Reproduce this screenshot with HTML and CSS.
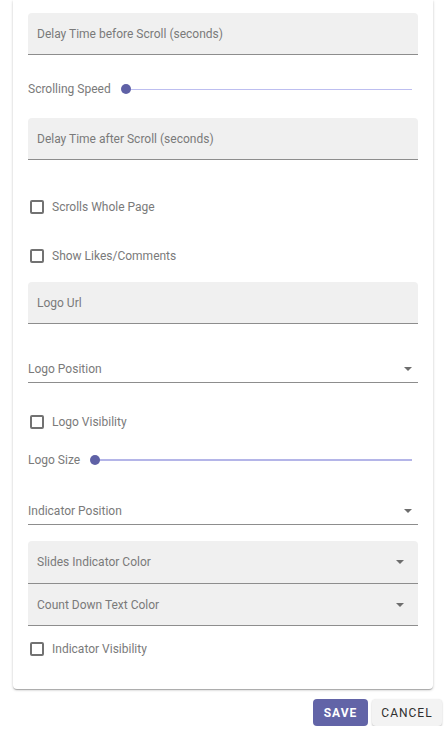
FILE: index.html
```html
<!DOCTYPE html>
<html>
<head>
<meta charset="utf-8">
<link rel="stylesheet" href="styles.css">
</head>
<body>
<div class="card">
  <div class="filled field-1"><span class="label">Delay Time before Scroll (seconds)</span></div>
  <div class="slider-row sr-1">
    <span class="slider-label">Scrolling Speed</span>
    <div class="slider"><span class="track thin"></span><span class="thumb"></span></div>
  </div>
  <div class="filled field-2"><span class="label">Delay Time after Scroll (seconds)</span></div>
  <label class="check cb-1"><span class="box"></span><span class="check-label">Scrolls Whole Page</span></label>
  <label class="check cb-2"><span class="box"></span><span class="check-label">Show Likes/Comments</span></label>
  <div class="filled field-3"><span class="label">Logo Url</span></div>
  <div class="select sel-1"><span class="sel-text">Logo Position</span><span class="arrow"></span></div>
  <label class="check cb-3"><span class="box"></span><span class="check-label">Logo Visibility</span></label>
  <div class="slider-row sr-2">
    <span class="slider-label">Logo Size</span>
    <div class="slider"><span class="track thick"></span><span class="thumb"></span></div>
  </div>
  <div class="select sel-2"><span class="sel-text">Indicator Position</span><span class="arrow"></span></div>
  <div class="filled fsel fs-1"><span class="label">Slides Indicator Color</span><span class="arrow"></span></div>
  <div class="filled fsel fs-2"><span class="label">Count Down Text Color</span><span class="arrow"></span></div>
  <label class="check cb-4"><span class="box"></span><span class="check-label">Indicator Visibility</span></label>
</div>
<div class="actions">
  <button class="btn save">SAVE</button>
  <button class="btn cancel">CANCEL</button>
</div>
</body>
</html>
```
FILE: styles.css
```css
* { box-sizing: border-box; }
html, body { margin: 0; padding: 0; background: #fff; }
body {
  font-family: Roboto, "Liberation Sans", Arial, sans-serif;
  font-size: 12px;
  color: #7a7a7a;
}
.card {
  margin-left: 13px;
  width: 420px;
  padding: 13px 15px 30px 15px;
  background: #fff;
  border-radius: 0 0 4px 4px;
  box-shadow: 0 1px 3px rgba(0,0,0,0.2), 0 1px 1px rgba(0,0,0,0.14), 0 2px 1px -1px rgba(0,0,0,0.12);
  display: flex;
  flex-direction: column;
}
.filled {
  height: 42px;
  background: #f0f0f0;
  border-radius: 4px 4px 0 0;
  border-bottom: 1px solid #8d8d8d;
  display: flex;
  align-items: center;
  padding-left: 9px;
  padding-right: 14px;
}
.label { line-height: 14px; }
.fsel { justify-content: space-between; }
.fs-2 { border-radius: 0; }
.slider-row {
  height: 20px;
  display: flex;
  align-items: center;
}
.slider-label { line-height: 14px; }
.slider {
  flex: 1;
  position: relative;
  height: 20px;
  margin-left: 10px;
  margin-right: 6px;
}
.track {
  position: absolute;
  left: 5px;
  right: 0;
  top: 50%;
}
.track.thin { height: 1px; margin-top: -0.5px; background: #bdbef0; }
.track.thick { height: 2px; margin-top: -1px; background: #b4b5e8; }
.thumb {
  position: absolute;
  left: 0;
  top: 50%;
  width: 10px;
  height: 10px;
  margin-top: -5px;
  border-radius: 50%;
  background: #5f61a6;
}
.check {
  height: 20px;
  display: flex;
  align-items: center;
}
.box {
  width: 14px;
  height: 14px;
  margin-left: 2px;
  border: 2px solid #727272;
  border-radius: 2px;
}
.check-label { margin-left: 8px; line-height: 14px; }
.select {
  height: 26px;
  border-bottom: 1px solid #8d8d8d;
  display: flex;
  align-items: center;
  justify-content: space-between;
  padding-right: 6px;
  padding-bottom: 1px;
}
.arrow {
  width: 0;
  height: 0;
  border-left: 4px solid transparent;
  border-right: 4px solid transparent;
  border-top: 4px solid #6d6d6d;
}
.sr-1 { margin-top: 24px; }
.field-2 { margin-top: 19px; }
.cb-1 { margin-top: 37px; }
.cb-2 { margin-top: 29px; }
.field-3 { margin-top: 16px; }
.sel-1 { margin-top: 33px; }
.cb-3 { margin-top: 29px; }
.sr-2 { margin-top: 18px; }
.sel-2 { margin-top: 29px; }
.fs-1 { margin-top: 16px; height: 43px; }
.cb-4 { margin-top: 13px; }
.actions {
  display: flex;
  justify-content: flex-end;
  gap: 4px;
  margin-top: 10px;
  padding-right: 6px;
}
.btn {
  height: 27px;
  border: none;
  border-radius: 4px;
  font-family: Roboto, "Liberation Sans", Arial, sans-serif;
  font-size: 12px;
  letter-spacing: 1px;
  padding: 0;
}
.save {
  width: 55px;
  background: #6264a7;
  color: #fff;
  font-weight: 700;
}
.cancel {
  width: 70px;
  background: #f3f3f3;
  color: #2f2f2f;
  font-weight: 400;
  box-shadow: 0 1px 2px rgba(0,0,0,0.25);
}
```
